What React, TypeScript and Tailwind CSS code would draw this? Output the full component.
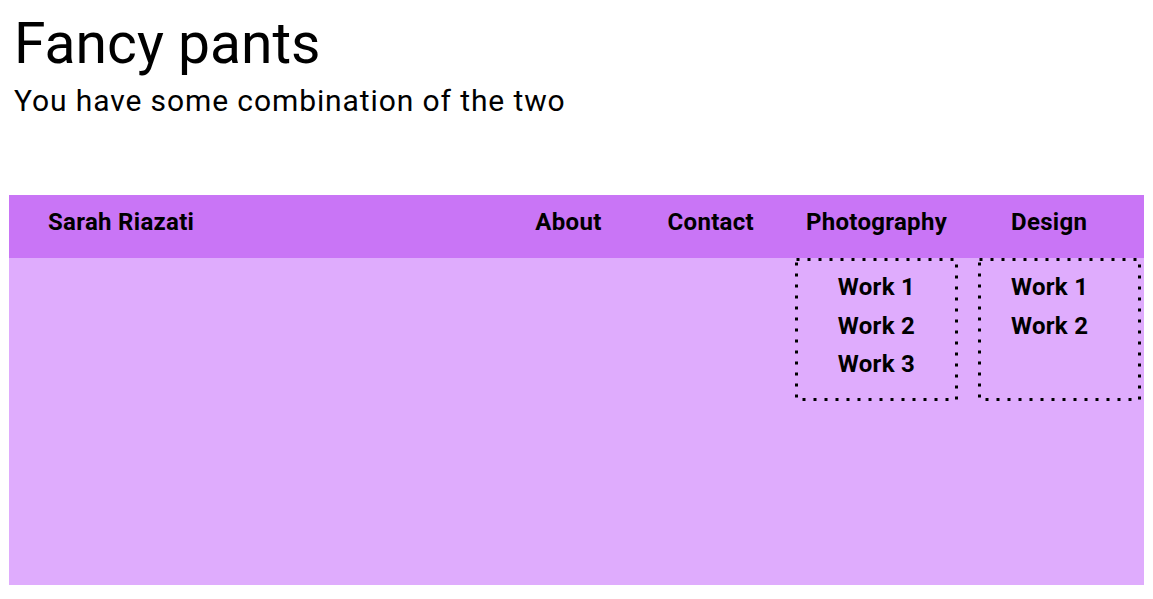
const DottedFrame = () => (
  <svg className="absolute inset-0 w-full h-full pointer-events-none" aria-hidden>
    <rect
      x="1.5"
      y="1.5"
      width="calc(100% - 3px)"
      height="calc(100% - 3px)"
      fill="none"
      stroke="#000"
      strokeWidth="3"
      strokeDasharray="3 8"
    />
  </svg>
)

const Dropdown = ({ items, align = 'center' }: { items: string[]; align?: 'center' | 'left' }) => (
  <div
    className={`relative h-[143px] pt-[10px] ${align === 'left' ? 'pl-[33px] text-left' : 'text-center'}`}
  >
    <DottedFrame />
    {items.map((item) => (
      <div key={item} className="leading-[38.5px]">{item}</div>
    ))}
  </div>
)

export default function App() {
  return (
    <div className="min-h-screen bg-white text-black font-['Roboto',sans-serif]">
      <header className="pt-[15px] pl-[14px]">
        <h1 className="text-[57px] leading-none font-normal">Fancy pants</h1>
        <p className="mt-[14px] text-[30px] leading-none tracking-[0.9px]">You have some combination of the two</p>
      </header>

      <nav className="mx-[9px] mt-[79px] h-[390px] bg-[#dfacfd] text-[24px] font-bold tracking-[0.3px]">
        <div className="flex h-[63px] bg-[#c975f6] pt-[11px] leading-[32px]">
          <div className="pl-[39px]">Sarah Riazati</div>
          <div className="ml-auto flex items-start pr-[3px]">
            <div className="mr-[66px]">About</div>
            <div className="mr-[41px]">Contact</div>
            <div className="w-[163px]">
              <div className="text-center">Photography</div>
              <div className="mt-[20px]">
                <Dropdown items={['Work 1', 'Work 2', 'Work 3']} />
              </div>
            </div>
            <div className="ml-[20px] w-[163px]">
              <div className="pl-[33px]">Design</div>
              <div className="mt-[20px]">
                <Dropdown items={['Work 1', 'Work 2']} align="left" />
              </div>
            </div>
          </div>
        </div>
      </nav>
    </div>
  )
}
